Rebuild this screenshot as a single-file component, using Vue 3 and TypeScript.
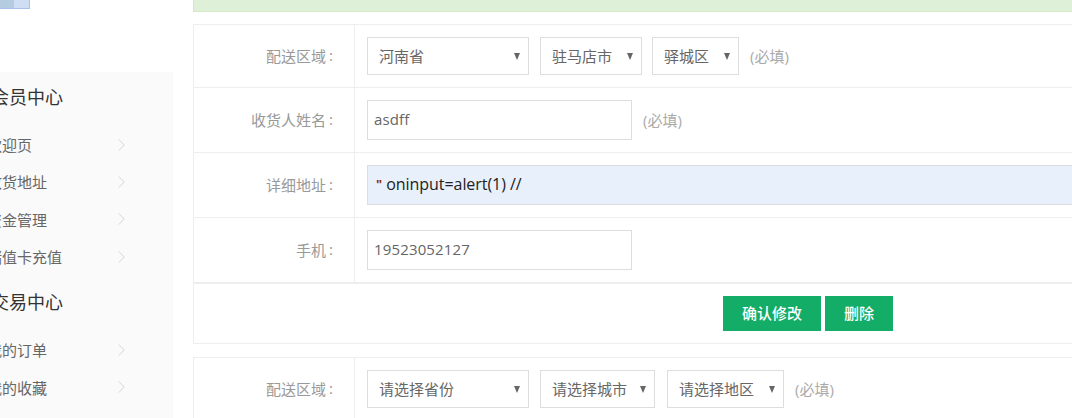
<script setup lang="ts">
interface SideGroup { title: string; items: string[] }
const groups: SideGroup[] = [
  { title: '会员中心', items: ['欢迎页', '收货地址', '资金管理', '储值卡充值'] },
  { title: '交易中心', items: ['我的订单', '我的收藏'] },
]
</script>

<template>
  <div class="page">
    <aside class="left">
      <div class="thumb"><span class="thumb-a"></span><span class="thumb-b"></span></div>
      <nav class="side">
        <section v-for="g in groups" :key="g.title" class="group">
          <h3 class="group-title">{{ g.title }}</h3>
          <ul class="list">
            <li v-for="it in g.items" :key="it" class="item">
              <span>{{ it }}</span>
              <svg class="chev" width="7" height="12" viewBox="0 0 7 12"><path d="M.8.5 6.2 6 .8 11.5" fill="none" stroke="#d4d4d4" stroke-width="1"/></svg>
            </li>
          </ul>
        </section>
      </nav>
    </aside>

    <main class="main">
      <div class="notice"></div>

      <form class="card first" @submit.prevent>
        <div class="row r1">
          <label class="lab">配送区域<span class="colon">:</span></label>
          <div class="val">
            <div class="sel w162">河南省<i class="tri"></i></div>
            <div class="sel w102">驻马店市<i class="tri"></i></div>
            <div class="sel w87">驿城区<i class="tri"></i></div>
            <span class="req">(必填)</span>
          </div>
        </div>
        <div class="row">
          <label class="lab">收货人姓名<span class="colon">:</span></label>
          <div class="val">
            <div class="inp w265">asdff</div>
            <span class="req r2">(必填)</span>
          </div>
        </div>
        <div class="row">
          <label class="lab">详细地址<span class="colon">:</span></label>
          <div class="val">
            <div class="inp filled"><b class="quote">"</b>&nbsp;oninput=alert(1) //</div>
          </div>
        </div>
        <div class="row last">
          <label class="lab">手机<span class="colon">:</span></label>
          <div class="val">
            <div class="inp w265">19523052127</div>
          </div>
        </div>
        <div class="actions">
          <button type="button" class="btn b1">确认修改</button>
          <button type="button" class="btn b2">删除</button>
        </div>
      </form>

      <form class="card second" @submit.prevent>
        <div class="row r1">
          <label class="lab">配送区域<span class="colon">:</span></label>
          <div class="val">
            <div class="sel w162">请选择省份<i class="tri"></i></div>
            <div class="sel w115">请选择城市<i class="tri"></i></div>
            <div class="sel w117">请选择地区<i class="tri"></i></div>
            <span class="req">(必填)</span>
          </div>
        </div>
      </form>
    </main>
  </div>
</template>

<style>
html, body { margin: 0; overflow: hidden; background: #fff; }
</style>

<style scoped>
.page {
  display: flex;
  width: 1072px;
  height: 418px;
  overflow: hidden;
  font-family: "Open Sans", "Noto Sans CJK SC", sans-serif;
  font-size: 15px;
  color: #666;
  background: #fff;
}
.left { width: 173px; flex: none; margin-right: 20px; }
.thumb { display: flex; width: 30px; height: 9px; box-sizing: border-box; border: 1px solid #a9c0ea; border-top: 0; border-left: 0; margin-bottom: 63px; }
.thumb-a { width: 14px; background: #b4cbe0; }
.thumb-b { flex: 1; background: #d0def3; }
.side { background: #fafafa; height: 346px; padding-top: 13px; box-sizing: border-box; }
.group-title { margin: 0 0 0 -9px; font-size: 18px; font-weight: 400; line-height: 24px; color: #333; }
.list { list-style: none; margin: 17px 0 0; padding: 0 48px 0 0; }
.item { display: flex; justify-content: space-between; align-items: center; height: 37.3px; margin-left: -13px; color: #666; }
.chev { flex: none; }
.group + .group { margin-top: 15px; }
.main { flex: none; width: 900px; }
.notice { height: 12px; box-sizing: border-box; background: #dff0d8; border-bottom: 1px solid #d6e9c6; border-left: 1px solid #d6e9c6; }
.card { border: 1px solid #eee; border-right: 0; }
.first { margin-top: 12px; }
.second { margin-top: 13px; }
.row { display: flex; height: 65px; border-bottom: 1px solid #eee; box-sizing: border-box; }
.r1 { height: 63px; }
.row.last { height: 66px; border-bottom: 2px solid #eee; }
.lab { width: 161px; flex: none; box-sizing: border-box; padding: 0 21px 2px 0; align-self: stretch; display: flex; align-items: center; justify-content: flex-end; color: #999; border-right: 1px solid #eee; }
.colon { margin-left: 3px; }
.val { flex: 1; display: flex; align-items: center; padding-left: 12px; }
.sel { position: relative; height: 38px; box-sizing: border-box; border: 1px solid #ddd; display: flex; align-items: center; padding: 0 0 2px 11px; margin-right: 11px; color: #666; }
.w162 { width: 162px; }
.w102 { width: 102px; margin-right: 10px; }
.w87 { width: 87px; }
.w115 { width: 115px; margin-right: 12px; }
.w117 { width: 117px; }
.tri { position: absolute; right: 8px; top: 15px; width: 0; height: 0; border-left: 3.5px solid transparent; border-right: 3.5px solid transparent; border-top: 7px solid #666; }
.req { color: #aaa; padding-bottom: 2px; }
.inp { height: 40px; box-sizing: border-box; border: 1px solid #ddd; display: flex; align-items: center; padding: 0 0 2px 6px; color: #666; letter-spacing: 0.15px; }
.w265 { width: 265px; }
.r2 { margin-left: 11px; }
.filled { flex: 1; padding-left: 8px; background: #e8f0fb; color: #222; font-size: 16px; letter-spacing: -0.05px; }
.quote { font-size: 13px; font-weight: 700; color: #8a2a00; }
.actions { display: flex; gap: 4px; height: 59px; align-items: center; padding-left: 529px; box-sizing: border-box; }
.btn { height: 35px; border: 0; padding: 0 0 2px; background: #13ad67; color: #fff; font: inherit; font-weight: 500; }
.b1 { width: 98px; }
.b2 { width: 68px; }
</style>
